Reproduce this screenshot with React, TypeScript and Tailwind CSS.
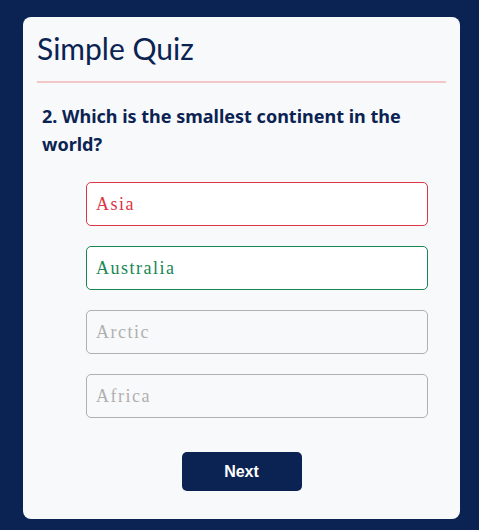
import React from "react";

const options = [
  { label: "Asia", cls: "bg-white border-[#dc3545] text-[#dc3545]" },
  { label: "Australia", cls: "bg-white border-[#198754] text-[#198754]" },
  { label: "Arctic", cls: "bg-[#f8f9fa] border-[#b0b0b0] text-[#b0b0b0]" },
  { label: "Africa", cls: "bg-[#f8f9fa] border-[#b0b0b0] text-[#b0b0b0]" },
];

export default function App() {
  return (
    <div className="w-[479px] h-[530px] bg-[#0b2352] pt-[17px] pl-[23px] overflow-hidden">
      <div className="w-[437px] h-[502px] rounded-lg bg-[#f8f9fa] px-[14px] pt-[13px]">
        <h1
          className="text-[30px] leading-[36px] text-[#0b2352] font-normal"
          style={{ fontFamily: 'Lato, "Noto Sans", sans-serif' }}
        >
          Simple Quiz
        </h1>
        <div className="mt-[15px] h-[2px] bg-[#f3c6c8]" />
        <h2
          className="mt-[19px] pl-[5px] text-[18px] leading-[28px] font-bold text-[#0b2352]"
          style={{ fontFamily: '"Noto Sans", sans-serif' }}
        >
          2. Which is the smallest continent in the world?
        </h2>
        <div className="mt-[24px] ml-[49px] w-[342px] flex flex-col gap-[20px]">
          {options.map((o) => (
            <div
              key={o.label}
              className={`h-[44px] border rounded-[5px] flex items-center pl-[9px] text-[18px] tracking-[1.5px] ${o.cls}`}
              style={{ fontFamily: '"Liberation Serif", serif' }}
            >
              {o.label}
            </div>
          ))}
        </div>
        <div className="mt-[34px] flex justify-center">
          <button
            className="w-[120px] h-[39px] rounded-[5px] bg-[#0b2352] text-white font-bold text-[16px]"
            style={{ fontFamily: '"Liberation Sans", Arial, sans-serif' }}
          >
            Next
          </button>
        </div>
      </div>
    </div>
  );
}
